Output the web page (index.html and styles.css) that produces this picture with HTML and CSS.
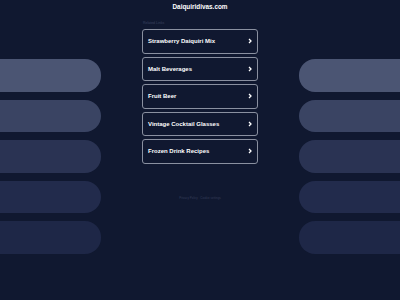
FILE: index.html
```html
<!DOCTYPE html>
<html>
<head>
    <meta charset="UTF-8">
    <title>Daiquiridivas.com</title>
    <link rel="stylesheet" href="styles.css">
</head>
<body>
    <!-- Header -->
    <div class="header">
        <h1 class="domain">Daiquiridivas.com</h1>
    </div>

    <div class="main">
        <!-- Left decoration -->
        <div class="side side-left">
            <div class="pill pill-1"></div>
            <div class="pill pill-2"></div>
            <div class="pill pill-3"></div>
            <div class="pill pill-4"></div>
            <div class="pill pill-5"></div>
        </div>

        <!-- Related links -->
        <div class="center">
            <div class="related-title">Related Links</div>
            <div class="links">
                <a class="link" href="#"><span>Strawberry Daiquiri Mix</span>
                    <svg class="chev" viewBox="0 0 4 6"><polyline points="1,1 3,3 1,5"></polyline></svg></a>
                <a class="link" href="#"><span>Malt Beverages</span>
                    <svg class="chev" viewBox="0 0 4 6"><polyline points="1,1 3,3 1,5"></polyline></svg></a>
                <a class="link" href="#"><span>Fruit Beer</span>
                    <svg class="chev" viewBox="0 0 4 6"><polyline points="1,1 3,3 1,5"></polyline></svg></a>
                <a class="link" href="#"><span>Vintage Cocktail Glasses</span>
                    <svg class="chev" viewBox="0 0 4 6"><polyline points="1,1 3,3 1,5"></polyline></svg></a>
                <a class="link" href="#"><span>Frozen Drink Recipes</span>
                    <svg class="chev" viewBox="0 0 4 6"><polyline points="1,1 3,3 1,5"></polyline></svg></a>
            </div>
            <div class="footer">Privacy Policy &nbsp; Cookie settings</div>
        </div>

        <!-- Right decoration -->
        <div class="side side-right">
            <div class="pill pill-1"></div>
            <div class="pill pill-2"></div>
            <div class="pill pill-3"></div>
            <div class="pill pill-4"></div>
            <div class="pill pill-5"></div>
        </div>
    </div>
</body>
</html>
```

FILE: styles.css
```css
/* --- Parked domain page --- */
body {
    font-family: 'Liberation Sans', Arial, sans-serif;
    background-color: #101830;
    margin: 0;
    padding: 0;
    height: 300px;
    overflow: hidden;
}

.header {
    height: 12px;
    display: flex;
    justify-content: center;
    align-items: center;
}

.domain {
    margin: 0;
    color: #ffffff;
    font-size: 6.4px;
    font-weight: bold;
}

.main {
    display: grid;
    grid-template-columns: 101px 1fr 101px;
}

/* Decorative pills on both sides */
.side {
    display: flex;
    flex-direction: column;
    gap: 8px;
    padding-top: 47.3px;
}

.pill {
    height: 32.5px;
}

.side-left .pill {
    border-radius: 0 16px 16px 0;
}

.side-right .pill {
    border-radius: 16px 0 0 16px;
}

.pill-1 { background-color: #4b5573; }
.pill-2 { background-color: #3a4463; }
.pill-3 { background-color: #2a3353; }
.pill-4 { background-color: #222b4c; }
.pill-5 { background-color: #1e2747; }

/* Center column */
.center {
    display: flex;
    flex-direction: column;
    align-items: center;
}

.related-title {
    width: 116px;
    height: 17px;
    padding-top: 8.5px;
    box-sizing: border-box;
    color: #3b4460;
    font-size: 3.5px;
    padding-left: 1px;
}

.links {
    width: 116px;
    display: flex;
    flex-direction: column;
    gap: 3px;
}

.link {
    height: 24.5px;
    box-sizing: border-box;
    border: 1px solid #8a90a0;
    border-radius: 3px;
    display: flex;
    align-items: center;
    justify-content: space-between;
    padding: 0 5px 0 5px;
    color: #ffffff;
    font-size: 6px;
    font-weight: bold;
    text-decoration: none;
}

.chev {
    width: 4px;
    height: 6px;
    fill: none;
    stroke: #ffffff;
    stroke-width: 1.3;
}

.footer {
    margin-top: 32px;
    color: #343c58;
    font-size: 3px;
}
```
